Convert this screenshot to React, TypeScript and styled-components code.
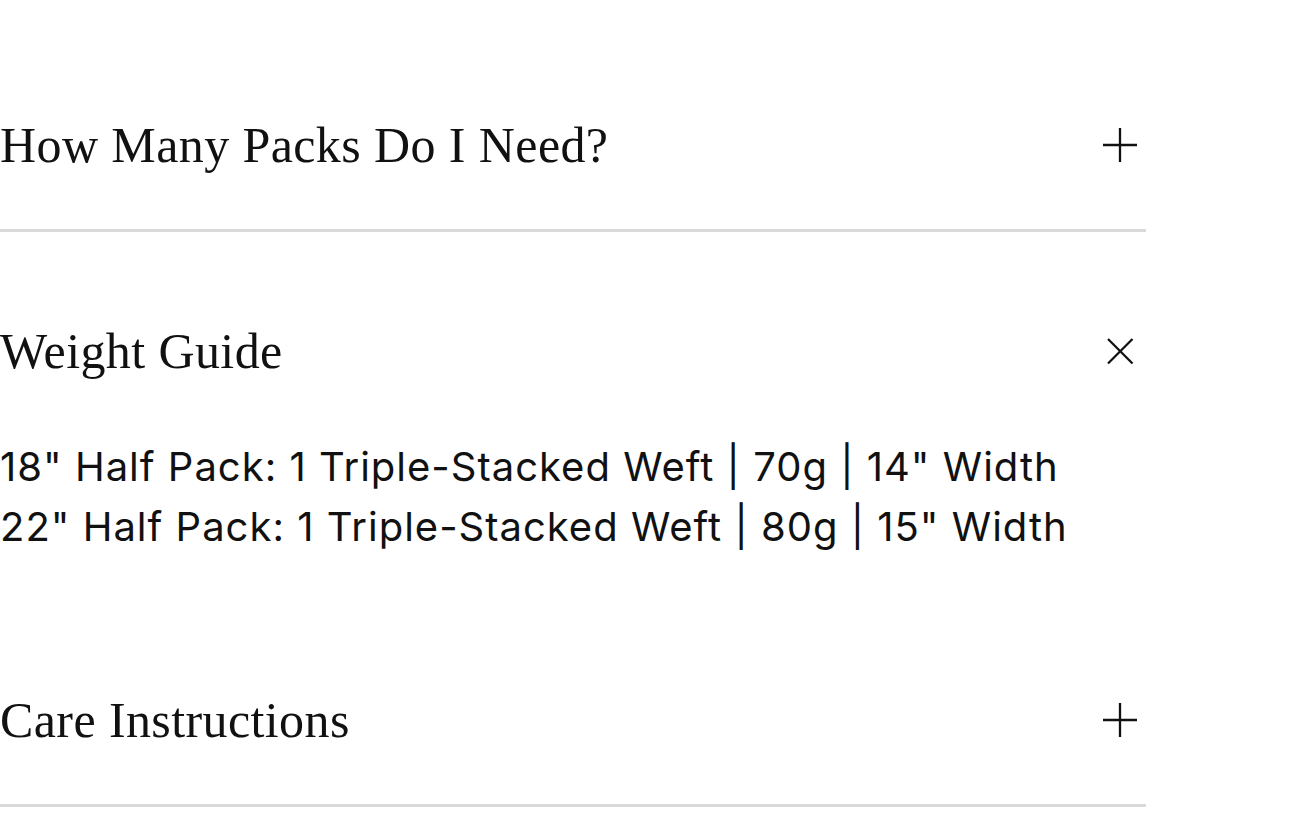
import React, { useState } from "react";
import styled, { createGlobalStyle } from "styled-components";

const GlobalStyle = createGlobalStyle`
  html, body {
    margin: 0;
    padding: 0;
    background: #ffffff;
  }
  body {
    font-family: Inter, "Liberation Sans", Arial, sans-serif;
    color: #111111;
  }
`;

const Accordion = styled.div`
  width: 1146px;
  padding-top: 26px;
`;

const Item = styled.section<{ $open: boolean }>`
  padding: 69px 0 ${(p) => (p.$open ? "44px" : "34px")};
  border-bottom: ${(p) => (p.$open ? "none" : "3px solid #d9d9d9")};
`;

const Header = styled.button`
  display: flex;
  align-items: center;
  justify-content: space-between;
  width: 100%;
  height: 100px;
  padding: 0 6px 0 0;
  margin: 0;
  border: none;
  background: none;
  cursor: pointer;
  text-align: left;
  color: inherit;
`;

const Title = styled.span`
  font-family: "Liberation Serif", "Times New Roman", serif;
  font-size: 50px;
  font-weight: 400;
  letter-spacing: 0.4px;
  line-height: 1;
  color: #111111;
`;

const Icon = styled.svg`
  width: 40px;
  height: 40px;
  flex: none;
  stroke: #111111;
  stroke-width: 2.3;
  fill: none;
`;

const Panel = styled.div`
  padding-top: 36px;
`;

const Line = styled.p`
  margin: 0;
  font-family: Inter, "Liberation Sans", Arial, sans-serif;
  font-size: 40px;
  letter-spacing: 1px;
  line-height: 60px;
  color: #111111;
`;

const PlusIcon = () => (
  <Icon viewBox="0 0 40 40">
    <line x1="3" y1="20" x2="37" y2="20" />
    <line x1="20" y1="3" x2="20" y2="37" />
  </Icon>
);

const CloseIcon = () => (
  <Icon viewBox="0 0 40 40">
    <line x1="8" y1="8" x2="32.5" y2="32.5" />
    <line x1="32.5" y1="8" x2="8" y2="32.5" />
  </Icon>
);

type Entry = { title: string; lines: string[] };

const entries: Entry[] = [
  { title: "How Many Packs Do I Need?", lines: [] },
  {
    title: "Weight Guide",
    lines: [
      '18" Half Pack: 1 Triple-Stacked Weft | 70g | 14" Width',
      '22" Half Pack: 1 Triple-Stacked Weft | 80g | 15" Width',
    ],
  },
  { title: "Care Instructions", lines: [] },
];

export default function App() {
  const [open, setOpen] = useState<number | null>(1);
  return (
    <>
      <GlobalStyle />
      <Accordion>
        {entries.map((e, i) => {
          const isOpen = open === i;
          return (
            <Item key={e.title} $open={isOpen}>
              <Header onClick={() => setOpen(isOpen ? null : i)}>
                <Title>{e.title}</Title>
                {isOpen ? <CloseIcon /> : <PlusIcon />}
              </Header>
              {isOpen && (
                <Panel>
                  {e.lines.map((l) => (
                    <Line key={l}>{l}</Line>
                  ))}
                </Panel>
              )}
            </Item>
          );
        })}
      </Accordion>
    </>
  );
}
